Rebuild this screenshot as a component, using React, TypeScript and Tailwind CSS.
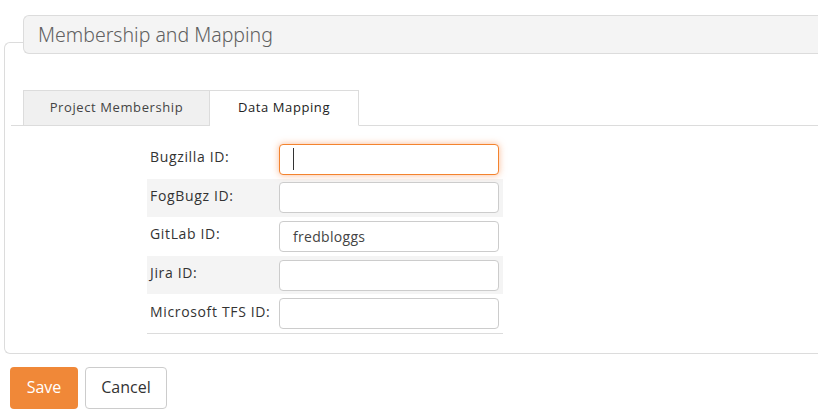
const rows = [
  { label: 'Bugzilla ID:', value: '', focused: true },
  { label: 'FogBugz ID:', value: '' },
  { label: 'GitLab ID:', value: 'fredbloggs' },
  { label: 'Jira ID:', value: '' },
  { label: 'Microsoft TFS ID:', value: '' },
]

export default function App() {
  return (
    <div className="w-[818px] h-[420px] bg-white overflow-hidden pl-[4px] pt-[42px] font-['Open_Sans',sans-serif] text-[#333]">
      {/* Fieldset */}
      <div className="border border-r-0 border-[#dcdcdc] rounded-l-[6px] h-[312px]">
        <div className="-mt-[28px] ml-[18px] h-[39px] bg-[#f4f4f4] border border-r-0 border-[#dcdcdc] rounded-l-[6px] flex items-center pl-[14px]">
          <span className="font-['Noto_Sans',sans-serif] font-light text-[19.5px] text-[#606060]">
            Membership and Mapping
          </span>
        </div>

        {/* Tabs */}
        <div className="mt-[35px] ml-[6px] flex items-end border-b border-[#dcdcdc] h-[37px]">
          <div className="ml-[12px] w-[187px] h-[36px] -mb-px bg-[#f0f0f0] border border-[#dcdcdc] flex items-center justify-center text-[13px] text-[#444] tracking-[0.6px]">
            Project Membership
          </div>
          <div className="w-[149px] h-[36px] -mb-px bg-white border border-l-0 border-b-white border-[#dcdcdc] flex items-center justify-center text-[13px] text-[#222] tracking-[0.6px]">
            Data Mapping
          </div>
        </div>

        {/* Form */}
        <div className="mt-[14px] ml-[142px] w-[356px] border-b border-[#dcdcdc]">
          {rows.map((r, i) => (
            <div
              key={r.label}
              className={`flex items-center h-[38.6px] ${i % 2 === 1 ? 'bg-[#f4f4f4]' : 'bg-white'}`}
            >
              <div className="w-[132px] pl-[3px] pb-[5px] text-[14px] text-[#333] tracking-[0.65px] whitespace-nowrap">{r.label}</div>
              <div
                className={`w-[220px] h-[31px] rounded-[4px] bg-white flex items-center pl-[13px] text-[14px] text-[#444] tracking-[0.3px] ${
                  r.focused
                    ? 'border border-[#f3832e] shadow-[0_0_7px_rgba(245,130,60,0.55)]'
                    : 'border border-[#cccccc]'
                }`}
              >
                {r.focused ? <span className="w-px h-[22px] bg-[#333]" /> : r.value}
              </div>
            </div>
          ))}
        </div>
      </div>

      {/* Buttons */}
      <div className="flex gap-[7px] mt-[13px] ml-[6px]">
        <button className="w-[68px] h-[42px] rounded-[4px] bg-[#f08838] text-white text-[16px] pb-[3px]">Save</button>
        <button className="w-[82px] h-[42px] rounded-[4px] bg-white border border-[#cccccc] text-[#333] text-[16px] pb-[3px]">
          Cancel
        </button>
      </div>
    </div>
  )
}
